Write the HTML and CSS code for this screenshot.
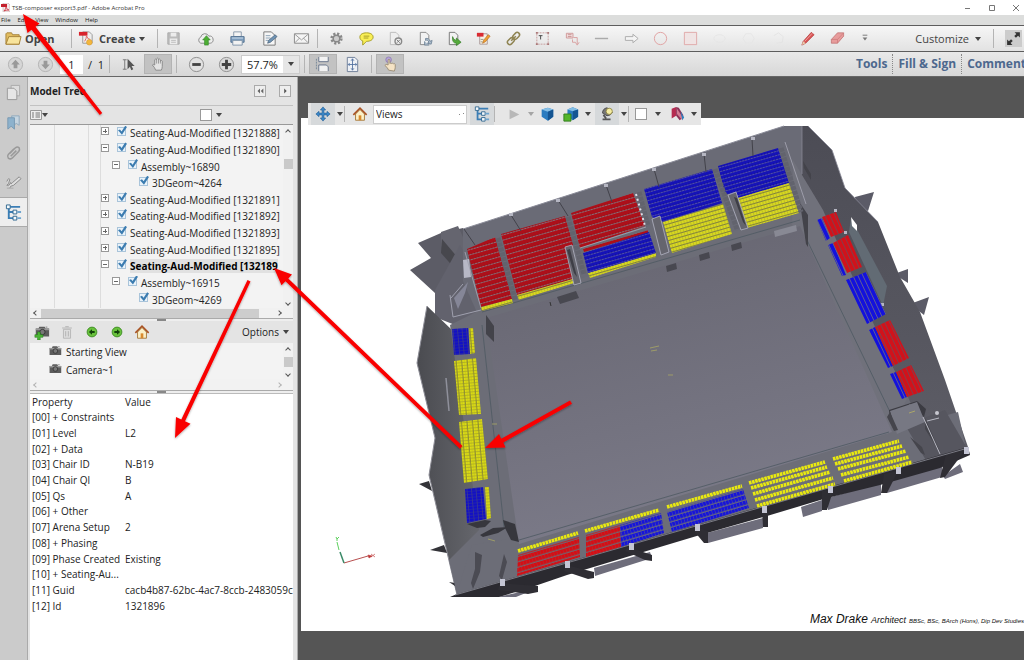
FILE: index.html
```html
<!DOCTYPE html>
<html lang="en">
<head>
<meta charset="utf-8">
<title>TSB-composer export3.pdf - Adobe Acrobat Pro</title>
<link rel="stylesheet" href="styles.css">
</head>
<body>
<div class="app">
  <header class="titlebar">
    <svg class="pdf-mark" viewBox="0 0 9 9"><path d="M2 0h5l2 2v7H2z" fill="#f4eaea" stroke="#b99" stroke-width=".5"/><path d="M0 1h6v3H0z" fill="#c4202c"/><path d="M3 8q2-2 2-4 1 3 3 3-3 0-5 1" fill="none" stroke="#c4202c" stroke-width=".7"/></svg>
    <h1 class="title">TSB-composer export3.pdf - Adobe Acrobat Pro</h1>
    <div class="win-controls">
      <button aria-label="Minimize"><svg viewBox="0 0 8 8"><path d="M1 4.5h5" stroke="#777"/></svg></button>
      <button aria-label="Maximize"><svg viewBox="0 0 8 8"><path d="M1.500 1.500h5v5h-5z" fill="none" stroke="#777"/></svg></button>
      <button aria-label="Close"><svg viewBox="0 0 8 8"><path d="M1 1l6 6M7 1L1 7" stroke="#777" fill="none"/></svg></button>
    </div>
  </header>
  <nav class="menubar">
    <button>File</button><button>Edit</button><button>View</button><button>Window</button><button>Help</button>
  </nav>

  <div class="toolbar main-tools">
    <button class="text-btn open">
      <svg class="ic18" viewBox="0 0 18 18"><path d="M1 15V4l1-1h5l1 2h7v10z" fill="#e2bd60" stroke="#a58238"/><path d="M1 15L4 7h13l-2 8z" fill="#f8e49c" stroke="#a58238"/></svg>
      Open</button>
    <span class="sep"></span>
    <button class="text-btn create">
      <svg class="ic18" viewBox="0 0 18 18"><path d="M5 2h7l3 3v9H5z" fill="#eee" stroke="#999"/><path d="M1 2h9v4H1z" fill="#d8232c"/><path d="M7 12q2-3 2-6 1 4 4 4" fill="none" stroke="#d66" /><circle cx="12" cy="13" r="3" fill="#f3b73d" stroke="#d2922a" stroke-width=".5"/></svg>
      Create <i class="caret"></i></button>
    <span class="sep"></span>
    <div class="icon-row file-group">
      <button aria-label="Save"><svg viewBox="0 0 18 18"><path d="M3 3h12v12H3z" fill="#bbb" stroke="#aaa"/><path d="M6 3h6v4H6zM5 9h8v6H5z" fill="#ececec"/><path d="M6.500 11h5M6.500 13h5" stroke="#bbb"/></svg></button>
      <button aria-label="Upload"><svg viewBox="0 0 18 18"><path d="M4 14a3.500 3.500 0 010-6.500 4.500 4.500 0 018.500-1A3.800 3.800 0 0114 14z" fill="#eee" stroke="#8a8a8a"/><path d="M10 6l4 4.500h-2V16H8v-5.500H6z" fill="#4dae34" stroke="#2d8321" stroke-width=".6"/></svg></button>
      <button aria-label="Print"><svg viewBox="0 0 18 18"><path d="M5 2h8v5H5z" fill="#f4f4f4" stroke="#8899aa"/><path d="M2 7h14v6H2z" fill="#7d9fc0" stroke="#52708f"/><path d="M4 11h10v5H4z" fill="#f2f2f2" stroke="#8095aa"/><path d="M3 8.500h12" stroke="#cfdeea"/></svg></button>
      <button aria-label="Edit"><svg viewBox="0 0 18 18"><path d="M3 2h8l4 4v10H3z" fill="#f6f6f6" stroke="#777"/><path d="M5 6h5M5 8.500h5M5 11h3" stroke="#8aa0b5"/><path d="M7 14l1-3 7-6 2 2-7 6z" fill="#6e93b4" stroke="#3f5870" stroke-width=".7"/></svg></button>
      <button aria-label="Mail"><svg viewBox="0 0 18 18"><path d="M1.500 4h15v10h-15z" fill="#f4f4f4" stroke="#888"/><path d="M2 4.500l7 6 7-6M2 13.500l5-5M16 13.500l-5-5" fill="none" stroke="#999"/></svg></button>
    </div>
    <span class="sep"></span>
    <div class="icon-row quick-group">
      <button aria-label="Settings"><svg viewBox="0 0 18 18"><circle cx="9" cy="9" r="5" fill="none" stroke="#888" stroke-width="3" stroke-dasharray="2.200 1.727"/><circle cx="9" cy="9" r="3.500" fill="#ccc" stroke="#888" stroke-width="1.600"/></svg></button>
      <button aria-label="Comment"><svg viewBox="0 0 18 18"><path d="M9 3c4 0 7 1.600 7 4.500S13 12 9 12l-4 4v-4.500C3 11 2 9.500 2 7.500 2 4.600 5 3 9 3z" fill="#f9ef55" stroke="#a49b27"/><path d="M6 6.500h6M6 8.500h5" stroke="#a49b27"/></svg></button>
      <button aria-label="Remove page"><svg viewBox="0 0 18 18"><path d="M3.500 2.500h6l3 3v10h-9z" fill="#eee" stroke="#bbb"/><circle cx="12" cy="12" r="3.500" fill="#eee" stroke="#888" stroke-width="1.500"/><path d="M10.500 10.500l3 3m0-3l-3 3" stroke="#777"/></svg></button>
      <button aria-label="Rotate page"><svg viewBox="0 0 18 18"><path d="M3.500 2.500h6l3 3v10h-9z" fill="#f2f2f2" stroke="#888"/><path d="M9 9a4 4 0 015 3l2-1-1 4-4-1 1.500-1a2.500 2.500 0 00-3.500-2zM8 12v4h5" fill="#aebccb" stroke="#657b91" stroke-width=".8"/></svg></button>
      <button aria-label="Extract page"><svg viewBox="0 0 18 18"><path d="M3.500 2.500h6l3 3v10h-9z" fill="#f2f2f2" stroke="#777"/><path d="M7 7q1 4 4 4V8.500l5 4.500-5 3.500V14q-5 0-4-7" fill="#56ab3c" stroke="#2f7721" stroke-width=".7"/></svg></button>
      <button aria-label="Edit PDF"><svg viewBox="0 0 18 18"><path d="M5 4h8v11H5z" fill="#f7f1e3" stroke="#a99"/><path d="M2 3h7v4H2z" fill="#d92b32"/><path d="M8 14l1-3 5-6 2 1.500-5 6z" fill="#f0a233" stroke="#b36b20" stroke-width=".7"/><path d="M6 10h3M6 12.500h2" stroke="#998"/></svg></button>
      <button aria-label="Link"><svg viewBox="0 0 18 18"><g transform="rotate(-45 9 9)" fill="none" stroke="#8f8452" stroke-width="1.600"><rect x="1" y="6.500" width="8" height="5" rx="2.500"/><rect x="9" y="6.500" width="8" height="5" rx="2.500"/><path d="M5.500 9h7"/></g></svg></button>
      <button aria-label="Text box"><svg viewBox="0 0 18 18"><path d="M3 3h12v12H3z" fill="none" stroke="#c79c9c" stroke-dasharray="2 1"/><path d="M2 2h2v2H2zM14 2h2v2h-2zM2 14h2v2H2zM14 14h2v2h-2z" fill="#a77"/><path d="M5 6h4M7 6v4" stroke="#444"/></svg></button>
      <button aria-label="Callout"><svg viewBox="0 0 18 18"><path d="M2.500 3.500h7v5h-7z" fill="#f4e4e4" stroke="#cf9898"/><path d="M4 5h4M4 7h4" stroke="#c68c8c"/><path d="M10 8h4v7m-2-2l2 3 2-3M9 10v3h3" fill="none" stroke="#d8a0a0"/></svg></button>
      <button aria-label="Line"><svg viewBox="0 0 18 18"><path d="M2 9h14" stroke="#aaa" stroke-width="1.500"/></svg></button>
      <button aria-label="Arrow"><svg viewBox="0 0 18 18"><path d="M2.500 7h8V4.500L16 9l-5.500 4.500V11h-8z" fill="#f4f4f4" stroke="#aaa"/></svg></button>
      <button aria-label="Oval"><svg viewBox="0 0 18 18"><circle cx="9" cy="9" r="6.500" fill="none" stroke="#e0a0a0"/></svg></button>
      <button aria-label="Rectangle"><svg viewBox="0 0 18 18"><path d="M2.500 2.500h13v13h-13z" fill="#f0e4e4" stroke="#e0a8a8"/></svg></button>
      <button aria-label="Cloud"><svg viewBox="0 0 18 18"><ellipse cx="9" cy="9" rx="6" ry="4" fill="none" stroke="#e5e5e5"/></svg></button>
      <button aria-label="Polygon"><svg viewBox="0 0 18 18"><path d="M6 4h6l3 5-3 5H6L3 9z" fill="none" stroke="#e5e5e5"/></svg></button>
      <button aria-label="Connected lines"><svg viewBox="0 0 18 18"><path d="M4 6l5-3 5 4-1 6-6 1" fill="none" stroke="#e3e3e3"/></svg></button>
      <button aria-label="Pencil"><svg viewBox="0 0 18 18"><path d="M3 16l1.500-4L13 2.500 16 5 7 14z" fill="#da5656" stroke="#a33" stroke-width=".7"/><path d="M3 16l1.500-4L7 14z" fill="#e8cfae"/><path d="M6 12l8-8.500" stroke="#f2a0a0"/></svg></button>
      <button aria-label="Eraser"><svg viewBox="0 0 18 18"><path d="M2.500 10L9 3h6.500v3.500L9 14H2.500z" fill="#e79c9c" stroke="#b66" stroke-width=".7"/><path d="M2.500 10H9v4M9 10l6.500-7" fill="none" stroke="#c77" stroke-width=".7"/></svg></button>
    </div>
    <button class="more" aria-label="More tools"><svg viewBox="0 0 18 18"><path d="M7 5.500h5" stroke="#777"/><path d="M7 8h5l-2.500 3z" fill="#777"/></svg></button>
    <button class="customize">Customize <i class="caret"></i></button>
    <span class="sep"></span>
    <button class="fullscreen" aria-label="Read mode"><svg viewBox="0 0 16 16"><path d="M9 2h5v5l-1.700-1.700-2 2-1.600-1.600 2-2zM7 14H2V9l1.700 1.700 2-2 1.600 1.600-2 2z" fill="#333"/></svg></button>
  </div>

  <div class="toolbar page-tools">
    <button class="round" aria-label="Previous page"><svg viewBox="0 0 18 18"><circle cx="9" cy="9" r="7.500" fill="#d6d6d6" stroke="#b3b3b3"/><path d="M9 4l4.500 5H11v4H7V9H4.500z" fill="#999"/></svg></button>
    <button class="round" aria-label="Next page"><svg viewBox="0 0 18 18"><circle cx="9" cy="9" r="7.500" fill="#d6d6d6" stroke="#b3b3b3"/><path d="M9 14l4.500-5H11V5H7v4H4.500z" fill="#999"/></svg></button>
    <input class="page-no" type="text" value="1" aria-label="Page number">
    <span class="page-total">/ &nbsp;1</span>
    <span class="sep"></span>
    <button class="tool select" aria-label="Select"><svg viewBox="0 0 18 18"><path d="M3 4h4M5 4v10M3 14h4" stroke="#777" fill="none"/><path d="M8 3v11l2.500-2.500L12 15l2-1-1.700-3.300H15.500z" fill="#555"/></svg></button>
    <button class="tool pressed" aria-label="Hand"><svg viewBox="0 0 18 18"><path d="M6 15q-1-3-3.500-5.500Q3 8 5 9.500V4q1-1.500 2 0V3q1-1.500 2 0v1q1-1.500 2 0v1.500q1.500-1.500 2 0V11q0 2-1 4z" fill="#e3e3e3" stroke="#888"/><path d="M7 4v4M9 4v4M11 5v3" stroke="#888" stroke-width=".8"/></svg></button>
    <span class="sep"></span>
    <button class="round" aria-label="Zoom out"><svg viewBox="0 0 18 18"><circle cx="9" cy="9" r="7.500" fill="#e2e2e2" stroke="#8c8c8c"/><path d="M4.500 7.500h9v3h-9z" fill="#444"/></svg></button>
    <button class="round" aria-label="Zoom in"><svg viewBox="0 0 18 18"><circle cx="9" cy="9" r="7.500" fill="#dcdcdc" stroke="#8c8c8c"/><path d="M4 7.500h3.500V4h3v3.500H14v3h-3.500V14h-3v-3.500H4z" fill="#444"/></svg></button>
    <div class="zoom-box"><input type="text" value="57.7%" aria-label="Zoom level"><button aria-label="Zoom levels"><i class="caret"></i></button></div>
    <span class="sep"></span>
    <button class="tool pressed" aria-label="Scrolling pages"><svg viewBox="0 0 18 18"><path d="M4 1v5h10V1M4 16V9.500h8l2 2V16" fill="#f2f2f2" stroke="#66748a"/><path d="M1.500 3v12" stroke="#789" stroke-dasharray="2 1"/></svg></button>
    <button class="tool fit" aria-label="Fit page"><svg viewBox="0 0 18 18"><path d="M3.500 1.500h8l3 3v12h-11z" fill="#eef1f6" stroke="#6e7e98"/><path d="M9 3v12M4.500 9h9M7.500 5L9 3l1.500 2M7.500 13L9 15l1.500-2M6 7.500L4.500 9 6 10.500M12 7.500L13.500 9 12 10.500" fill="none" stroke="#4f6f9e" stroke-width=".9"/></svg></button>
    <span class="sep"></span>
    <button class="tool pressed" aria-label="Interact"><svg viewBox="0 0 18 18"><circle cx="7" cy="4" r="3" fill="#b5a4d6" stroke="#8570b0" stroke-width=".7"/><path d="M7 15q-1-3-4-5 1-2 3.500-.5V4q1-1.200 1.800 0v4q1-1 2 0 1-.8 2 .3 1-.6 1.700.6V12q0 1.500-1 4z" fill="#f5e3c5" stroke="#8e8068" stroke-width=".8"/></svg></button>
    <div class="pane-links"><a href="#tools">Tools</a><a href="#sign">Fill &amp; Sign</a><a href="#comment">Comment</a></div>
  </div>

  <main class="workspace">
    <nav class="rail">
      <button aria-label="Page thumbnails"><svg viewBox="0 0 18 18"><path d="M6.500 1.500h9v11h-9z" fill="#ddd" stroke="#aaa"/><path d="M2.500 4.500h7l3 3v9h-10z" fill="#e6e6e6" stroke="#999"/></svg></button>
      <button aria-label="Bookmarks"><svg viewBox="0 0 18 18"><path d="M7 2h8v10l-3-2-3 2z" fill="#c6d5e0" stroke="#8ea9bd"/><path d="M3 4h7v12l-3.500-3L3 16z" fill="#8db2cd" stroke="#7799b3"/></svg></button>
      <button aria-label="Attachments"><svg viewBox="0 0 18 18"><path d="M5 10l6-6q2-1.500 4 0 1 2-.5 4l-7 7q-2 1.500-4 0-1.500-2 0-4l6-6M6 13l6-6" fill="none" stroke="#999" stroke-width="1.600"/></svg></button>
      <button aria-label="Signatures"><svg viewBox="0 0 18 18"><path d="M2 8q2-5 3-2-1 5-3 6 3 1 4-3 0 3 2 0l7-6 2 2-8 7-3 1-1 2" fill="#ddd" stroke="#888"/><path d="M2 15h7" stroke="#aaa"/></svg></button>
      <button class="current" aria-label="Model tree"><svg viewBox="0 0 18 18"><use href="#tree-glyph"/></svg></button>
    </nav>

    <aside class="panel">
      <div class="panel-head">
        <h2>Model Tree</h2>
        <button aria-label="Collapse"><svg viewBox="0 0 12 12"><path d="M6 3v6L3 6zM10 3v6L7 6z" fill="#666"/></svg></button>
        <button aria-label="Panel menu"><svg viewBox="0 0 12 12"><path d="M5 3v6l3-3z" fill="#555"/></svg></button>
      </div>
      <div class="panel-tools">
        <button class="opt" aria-label="Display options"><svg viewBox="0 0 12 10"><path d="M.5.500h11v9H.5z" fill="#eee" stroke="#999"/><path d="M2 3h2M2 5h2M2 7h2M5.500 3h4.500M5.500 5h4.500M5.500 7h4.500" stroke="#777"/></svg><i class="caret"></i></button>
        <button class="swatch-btn" aria-label="Background"><span class="swatch"></span><i class="caret"></i></button>
      </div>
      <div class="tree-box">
        <div class="tree-main">
          <ul class="tree">
            <li class="l1"><button class="tg plus" aria-label="Expand"></button><label><input type="checkbox" checked>Seating-Aud-Modified [1321888]</label></li>
            <li class="l1"><button class="tg" aria-label="Collapse"></button><label><input type="checkbox" checked>Seating-Aud-Modified [1321890]</label></li>
            <li class="l2"><button class="tg" aria-label="Collapse"></button><label><input type="checkbox" checked>Assembly~16890</label></li>
            <li class="l3"><label><input type="checkbox" checked>3DGeom~4264</label></li>
            <li class="l1"><button class="tg plus" aria-label="Expand"></button><label><input type="checkbox" checked>Seating-Aud-Modified [1321891]</label></li>
            <li class="l1"><button class="tg plus" aria-label="Expand"></button><label><input type="checkbox" checked>Seating-Aud-Modified [1321892]</label></li>
            <li class="l1"><button class="tg plus" aria-label="Expand"></button><label><input type="checkbox" checked>Seating-Aud-Modified [1321893]</label></li>
            <li class="l1"><button class="tg plus" aria-label="Expand"></button><label><input type="checkbox" checked>Seating-Aud-Modified [1321895]</label></li>
            <li class="l1 selected"><button class="tg" aria-label="Collapse"></button><label><input type="checkbox" checked><span>Seating-Aud-Modified [132189</span></label></li>
            <li class="l2"><button class="tg" aria-label="Collapse"></button><label><input type="checkbox" checked>Assembly~16915</label></li>
            <li class="l3"><label><input type="checkbox" checked>3DGeom~4269</label></li>
          </ul>
          <div class="vscroll"><i class="chev up"></i><span class="thumb low"></span><i class="chev down"></i></div>
        </div>
        <div class="hscroll"><i class="chev left"></i><span class="thumb"></span><i class="chev right"></i></div>
      </div>
      <div class="splitter"></div>
      <div class="view-tools">
        <button aria-label="Add view"><svg viewBox="0 0 18 18"><use href="#camera"/><path d="M1 12h3V9h3v3h3v3H7v3H4v-3H1z" fill="#4cb535" stroke="#23791a" stroke-width=".6"/></svg></button>
        <button aria-label="Delete view"><svg viewBox="0 0 18 18"><path d="M5 6h8v10H5z" fill="#ddd" stroke="#b5b5b5"/><path d="M3.500 4.500h11M7 3h4M7.500 8v6M10.500 8v6" stroke="#b0b0b0"/></svg></button>
        <button aria-label="Previous view"><svg viewBox="0 0 18 18"><circle cx="9" cy="9" r="5.500" fill="#68c13c" stroke="#3c8a22"/><path d="M5.500 9L9 5.800V8h3v2H9v2.200z" fill="#12420a"/></svg></button>
        <button aria-label="Next view"><svg viewBox="0 0 18 18"><circle cx="9" cy="9" r="5.500" fill="#68c13c" stroke="#3c8a22"/><path d="M12.500 9L9 5.800V8H6v2h3v2.200z" fill="#12420a"/></svg></button>
        <button aria-label="Default view"><svg viewBox="0 0 18 18"><use href="#home"/></svg></button>
        <button class="options">Options <i class="caret"></i></button>
      </div>
      <div class="views-box">
        <div class="views-main">
          <ul class="views">
            <li><svg viewBox="0 0 18 18"><use href="#camera"/></svg>Starting View</li>
            <li><svg viewBox="0 0 18 18"><use href="#camera"/></svg>Camera~1</li>
          </ul>
          <div class="vscroll"><i class="chev up"></i><span class="thumb"></span><i class="chev down"></i></div>
        </div>
        <div class="hscroll off"><i class="chev left"></i><i class="chev right"></i></div>
      </div>
      <div class="splitter"></div>
      <div class="props-box">
        <table class="props">
          <thead><tr><th scope="col">Property</th><th scope="col">Value</th></tr></thead>
          <tbody>
            <tr><td>[00] + Constraints</td><td></td></tr>
            <tr><td>[01] Level</td><td>L2</td></tr>
            <tr><td>[02] + Data</td><td></td></tr>
            <tr><td>[03] Chair ID</td><td>N-B19</td></tr>
            <tr><td>[04] Chair Ql</td><td>B</td></tr>
            <tr><td>[05] Qs</td><td>A</td></tr>
            <tr><td>[06] + Other</td><td></td></tr>
            <tr><td>[07] Arena Setup</td><td>2</td></tr>
            <tr><td>[08] + Phasing</td><td></td></tr>
            <tr><td>[09] Phase Created</td><td>Existing</td></tr>
            <tr><td>[10] + Seating-Au...</td><td></td></tr>
            <tr><td>[11] Guid</td><td>cacb4b87-62bc-4ac7-8ccb-2483059c</td></tr>
            <tr><td>[12] Id</td><td>1321896</td></tr>
          </tbody>
        </table>
      </div>
    </aside>

    <section class="viewer">
      <div class="sheet">
        <svg class="model" viewBox="301 118 723 487" role="img" aria-label="Arena seating model">
          <defs>
            <linearGradient id="floor" x1="0" y1="0" x2=".3" y2="1"><stop offset="0" stop-color="#65646f"/><stop offset="1" stop-color="#7b7a88"/></linearGradient>
            <linearGradient id="wallL" x1="0" y1="0" x2="1" y2="0"><stop offset="0" stop-color="#4a4b50"/><stop offset="1" stop-color="#66676d"/></linearGradient>
            <linearGradient id="wallR" x1="0" y1="0" x2="0" y2="1"><stop offset="0" stop-color="#4c4c55"/><stop offset="1" stop-color="#5d5d66"/></linearGradient>
            <pattern id="tr" width="3" height="5" patternUnits="userSpaceOnUse" patternTransform="rotate(-16)"><path d="M0 0h3v5H0z" fill="#ad0f19"/><path d="M0 4.500h3" stroke="#8d6b75"/><path d="M2.700 3v2" stroke="#6d1018" stroke-width=".5"/></pattern>
            <pattern id="tb" width="3" height="4" patternUnits="userSpaceOnUse" patternTransform="rotate(-16)"><path d="M0 0h3v4H0z" fill="#1512b8"/><path d="M0 3.600h3" stroke="#6664a4" stroke-width=".8"/><path d="M2.700 2v2" stroke="#0c0a6c" stroke-width=".5"/></pattern>
            <pattern id="ty" width="3" height="4" patternUnits="userSpaceOnUse" patternTransform="rotate(-16)"><path d="M0 0h3v4H0z" fill="#d8d820"/><path d="M0 3.500h3" stroke="#7f7f42"/><path d="M2.700 0v4" stroke="#9a9a26" stroke-width=".5"/></pattern>
            <pattern id="ly" width="5.500" height="3" patternUnits="userSpaceOnUse" patternTransform="rotate(-5)"><path d="M0 0h6v3H0z" fill="#8e8e32"/><path d="M0 0h4.300v2.500H0z" fill="#dddd12"/><path d="M2 0v3" stroke="#b0b020" stroke-width=".5"/></pattern>
            <pattern id="lb" width="4.500" height="3" patternUnits="userSpaceOnUse" patternTransform="rotate(-5)"><path d="M0 0h5v3H0z" fill="#3c3b8c"/><path d="M0 0h3.800v2.600H0z" fill="#1210c4"/></pattern>
            <pattern id="rr" width="4.500" height="3" patternUnits="userSpaceOnUse" patternTransform="rotate(-25)"><path d="M0 0h5v3H0z" fill="#7a444e"/><path d="M0 0h3.700v3H0z" fill="#d1121b"/></pattern>
            <pattern id="rb" width="4.500" height="3" patternUnits="userSpaceOnUse" patternTransform="rotate(-25)"><path d="M0 0h5v3H0z" fill="#66668c"/><path d="M0 0h3.700v3H0z" fill="#1411dc"/></pattern>
            <pattern id="fr" width="3.200" height="5.200" patternUnits="userSpaceOnUse" patternTransform="rotate(-16.500)"><path d="M0 0h4v6H0z" fill="#77606a"/><path d="M0 0h3v4H0z" fill="#d50e14"/></pattern>
            <pattern id="fb" width="3.200" height="5.200" patternUnits="userSpaceOnUse" patternTransform="rotate(-16.500)"><path d="M0 0h4v6H0z" fill="#676781"/><path d="M0 0h2.800v4H0z" fill="#1614da"/></pattern>
          </defs>
          <!-- outer fins and walls -->
          <path d="M418 243l23-10 22-5 20 40-40 50-8-25-25-23 21-12z" fill="#5c5c66"/>
          <path d="M441 232l17-6 20 45-13 7-24-32z" fill="#65656f"/>
          <path d="M442 239l22 26v14l-23-26z" fill="#47474d"/>
          <path d="M435 290l25-45 30 60-10 30-45-18z" fill="#62626d"/>
          <path d="M427 306l25 24 28 202-5 63h-18L429 475l6-37-18-75z" fill="url(#wallL)"/>
          <path d="M427 306l-10 57 18 75-6 37 28 120" fill="none" stroke="#8c8c95"/>
          <path d="M419 484l10-3 3 10zM430 550l14-5 3 8zM449 582l6 1v3z" fill="#333338"/>
          <path d="M463 229L784 126h24l30 80-45 40-310 80-20-45z" fill="#6a6b76"/>
          <path d="M463 229L784 126" stroke="#8b8c99" fill="none"/>
          <path d="M855 197l19-5-6 19-12-4zM894 274l14-5v14zM910 304l19-7-5 18z" fill="#5b5b67"/>
          <path d="M802 126h6l24 24 13 38 33 34 22 55 20 35 25 68 23 67-40 8-100-190-26-80z" fill="url(#wallR)"/>
          <path d="M851 218l36 68-4 20-34-74z" fill="#626b74"/>
          <path d="M851 217l6 8v6l-5-5z" fill="#fff"/>
          <path d="M802 126v48M808 126l24 24 13 38 33 34" fill="none" stroke="#888895" stroke-width=".8"/>
          <!-- concourses and arena floor -->
          <path d="M450 325l32-16 318-98 16 6 92 180 20 45 37 12-508 141-8-35 30-30z" fill="#6c6d77"/>
          <path d="M472 545l46-8 440-125 8 36-509 147 6-22z" fill="#6c6d77"/>
          <path d="M905 425l40-15 22 38-40 14z" fill="#56565f"/>
          <path d="M793 160l30 50 84 189-20 36-95-195z" fill="#70717b"/>
          <path d="M486 318L800 226l92 206-373 112z" fill="url(#floor)"/>
          <path d="M482 312L800 220M519 540l370-108M482 325l22 202M806 238l86 178" fill="none" stroke="#4e5962" stroke-width=".8"/>
          <path d="M557 297l19-6 3 7-19 6zM666 266l10-3 1 6-10 3zM699 255l10-3 1 6-10 3zM731 245l10-3 1 6-10 3z" fill="#484850"/>
          <path d="M774 231l22-6 1 6-22 6z" fill="#888994"/>
          <path d="M486 315l8 11v16l-8-8zM800 203l8 12v32l-2-3zM803 161l8 13v6l-7-12z" fill="#43434a"/>
          <path d="M550 302l1 4" stroke="#333"/>
          <path d="M463 260l6-1 2 18-7 1z" fill="#b7b8c6"/>
          <path d="M450 295l3 22 28-7M451 298l12-14" fill="none" stroke="#9fa0ae"/>
          <path d="M454 298l14-16-3 11-7 16z" fill="#858697"/>
          <path d="M446 378l3 33" stroke="#8f909b" stroke-width="1.500"/>
          <!-- upper stand -->
          <path d="M467 249l28-12 17 62-31 8z" fill="url(#tr)"/>
          <path d="M501 234l64-18 8 28v35l-56 16z" fill="url(#tr)"/>
          <path d="M571 213l62-20 12 33-65 22zM583 249l65-19v3l-64 19z" fill="url(#tr)"/>
          <path d="M481 307l31-8 1 4-31 8zM517 295l56-16 1 4-55 17zM588 273l68-20v4l-66 21z" fill="url(#ty)"/>
          <path d="M583 253l66-21 7 21-68 20z" fill="url(#tb)"/>
          <path d="M644 189l68-20 10 34-59 19-11-5zM718 166l60-18 11 35-51 15-13-5z" fill="url(#tb)"/>
          <path d="M663 222l60-18 9 30-60 19zM738 198l51-15 10 30-52 15z" fill="url(#ty)"/>
          <g fill="none" stroke="#62636d" stroke-width="5" stroke-dasharray="4 1"><path d="M498 238l17 62M568 217l16 57M639 192l9 34M715 169l22 60M781 148l20 64"/></g>
          <g fill="#65656e" stroke="#b3b4c3" stroke-width=".8"><path d="M565 247l7-2 9 38-7 2zM652 219l8-3 9 36-8 3zM728 195l8-3 12 36-7 2z"/></g>
          <g fill="#3e3e46"><path d="M567 250l3-1 7 28-3-4zM734 197l3 1 9 28-3-4z"/></g>
          <path d="M580 248l66-21M465 252l16 56M785 142l21 62" fill="none" stroke="#a1a2af" stroke-width=".9"/>
          <g stroke="#42424a" fill="none"><path d="M464 229l11 16M511 215l10 16M558 200l10 16M606 185l6 17M654 169l5 18M704 154l2 18M752 139l1 17"/></g>
          <g fill="#b5b6c2"><path d="M509 213h4v3h-4zM556 199h4v3h-4zM604 184h4v3h-4zM652 168h4v3h-4zM702 153h4v3h-4zM751 137h4v3h-4zM834 209h3v3h-3zM844 231h3v3h-3zM881 303h3v3h-3z"/></g>
          <path d="M636 194l9 32" stroke="#dedee8" stroke-width="2" stroke-dasharray="2 3"/>
          <!-- right stand -->
          <path d="M817 220l5-2 8 20-4 3zM828 245l5-2 13 32-4 1zM846 280l20-8 20 42-19 10zM869 330l6-3 18 39-5 2zM890 374l6-2 11 25-5 2z" fill="url(#rb)"/>
          <path d="M822 217l14-5 8 20-13 5zM833 243l15-8 14 32-15 6zM875 327l15-7 19 38-16 8zM896 372l15-7 13 26-17 6z" fill="url(#rr)"/>
          <!-- left stand -->
          <path d="M452 329l16-1 2 26-16 1zM465 489l18-2 3 32-19 4z" fill="url(#lb)"/>
          <path d="M469 328h4l2 25-5 1zM454 361l22-3 5 56-22 1zM459 422l23-3 6 60-24 4zM485 487h4l2 31-4 1z" fill="url(#ly)"/>
          <path d="M467 524l18-4 6 1-6 6-8 1zM480 535l13-7 15-1-10 6-15 4zM503 520l12 4 4 18-8-2-6-12z" fill="#37373d"/>
          <path d="M475 552l7 3-2 17-7 17-2-6 4-14zM504 554l3 8-5 18-3-4z" fill="#4b4b53"/>
          <path d="M889 410l28-9 9 8-2 8-14-13-20 14z" fill="#3b3b42"/>
          <path d="M890 411l27-9 8 20-28 12z" fill="#777883"/>
          <path d="M890 412l8 18-4 1-7-14zM910 437l12 10 3 8-4-2zM925 418l16 36-16-25z" fill="#45454c"/>
          <path d="M923 417l17 37M927 421l12-3" stroke="#b9bac4" fill="none"/><circle cx="937" cy="413" r="2" fill="#c8c8d0"/>
          <!-- front wall: outer panels, wall band, buttresses -->
          <path d="M498 597l40-9-22 9zM594 568l56-16 2 6-57 18zM707 533l56-15v10l-55 15zM801 507l21-7v11l-19 6zM827 498l54-15v12l-53 15zM888 482l54-16v11l-55 16zM943 476l17-12 3 8-18 7z" fill="#6e6d7b"/>
          <path d="M450 597l7-3 511-147 2 8-30 13-60 17-53 13-60 18-67 19-60 18-73 22-38 13-30 9z" fill="#2b2a30"/>
          <path d="M500 583l38 3v6l-10 2-30-4zM566 565l28 7v6l-6 1-24-8zM628 547l24 8v6l-7-1-20-9zM695 527l13 4v12h-4l-10-12zM762 508l6 4v15h-5zM822 490l11 1-6 19h-5zM884 474l14-3-11 22h-6zM966 449l-21 28-5 1 6-24z" fill="#2f2e34"/>
          <path d="M455 595l513-147" stroke="#8f909a" stroke-width=".8"/>
          <!-- front stand -->
          <path d="M518 555l61-18 1 20-63 19zM586 535l34-10 1 22-35 10z" fill="url(#fr)"/>
          <path d="M620 525l41-12 3 20-43 14zM667 512l76-23 6 19-77 24z" fill="url(#fb)"/>
          <g fill="none" stroke="#e9e910" stroke-width="3.600" stroke-dasharray="2.600 .6"><path d="M518 551l60-18M585 531l74-21M667 507l75-21M749 483l76-21M751 488l76-21M753 494l77-22M755 500l78-22M757 506l78-22M833 459l66-18M835 464l67-18M838 469l68-18M841 475l68-18M844 481l68-19"/></g>
          <g fill="#c4c5d4"><path d="M500 579h5v7h-5zM565 561h5v7h-5zM629 543h5v7h-5zM695 524h5v7h-5zM762 506h5v7h-5zM828 486h5v7h-5zM896 467h5v7h-5zM964 447h5v7h-5z"/></g>
          <path d="M650 348l9-2m-8 5l6-1M668 375h5M492 424h5M488 539l7 2M780 403" stroke="#a3a067" fill="none" stroke-width=".9"/><path d="M909 413l6-2" stroke="#aaa668"/>
          <!-- axes -->
          <path d="M344 563l24-7" stroke="#b85050" fill="none"/><path d="M368 555l4 1-3 2zM371 554l4 3m0-3l-4 3" fill="#b33" stroke="#b33" stroke-width=".6"/>
          <path d="M344 563l-4-11" stroke="#3a8a68" fill="none" stroke-width="1.500"/><path d="M339 550l-2-8m-1-5l1 2 2-2m-2 2v2" stroke="#5dd05d" fill="none"/>
        </svg>
        <p class="credit"><span class="name">Max Drake</span> <span class="role">Architect</span> <span class="quals">BBSc, BSc, BArch (Hons), Dip Dev Studies</span></p>
      </div>

      <div class="model-tools">
        <button class="on" aria-label="Rotate"><svg viewBox="0 0 18 18"><path d="M9 1l3 3.500h-2V8h3.500V6L17 9l-3.500 3v-2H10v3.500h2L9 17l-3-3.500h2V10H4.500v2L1 9l3.500-3v2H8V4.500H6z" fill="#3d89c9" stroke="#255f96" stroke-width=".7"/></svg></button>
        <button class="drop" aria-label="Navigation tools"><i class="caret"></i></button>
        <span class="sep first"></span>
        <button class="home" aria-label="Home view"><svg viewBox="0 0 18 18"><use href="#home"/></svg></button>
        <select aria-label="Views"><option>Views</option></select>
        <button class="on" aria-label="Toggle model tree"><svg viewBox="0 0 18 18"><use href="#tree-glyph"/></svg></button>
        <span class="sep"></span>
        <button class="play" aria-label="Play"><svg viewBox="0 0 18 18"><path d="M4 4l11 5.500L4 15z" fill="#b8b8b8"/></svg></button>
        <button class="drop faded" aria-label="Animation options"><i class="caret"></i></button>
        <button aria-label="Projection"><svg viewBox="0 0 18 18"><path d="M3 4l7-2 6 2v8l-6 4.500L3 12z" fill="#2b7cc0"/><path d="M3 4l7-2 6 2-6 2.500z" fill="#86bfe6"/><path d="M10 6.500L16 4v8l-6 4.500z" fill="#155592"/></svg></button>
        <button aria-label="Render mode"><svg viewBox="0 0 18 18"><path d="M5 4l6-2.500L17 4v8l-6 4-6-4z" fill="#2b7cc0"/><path d="M5 4l6-2.500L17 4l-6 2z" fill="#82bde4"/><path d="M11 6l6-2v8l-6 4z" fill="#155592"/><path d="M1 9h8v8H1z" fill="#54b52b" stroke="#2f7b1b"/></svg></button>
        <button class="drop" aria-label="Render modes"><i class="caret"></i></button>
        <button class="on" aria-label="Lighting"><svg viewBox="0 0 18 18"><path d="M4 8q0-5 5-6l6 5q-2 4-6 4z" fill="#777" stroke="#444"/><circle cx="11.500" cy="6" r="3.500" fill="#f5eda2" stroke="#8e8543"/><path d="M5 10l3 4M4 15h9" stroke="#555" stroke-width="2"/></svg></button>
        <button class="drop" aria-label="Lighting options"><i class="caret"></i></button>
        <span class="sep"></span>
        <button class="swatch-btn" aria-label="Background color"><span class="swatch"></span></button>
        <button class="drop" aria-label="Background colors"><i class="caret"></i></button>
        <button class="section" aria-label="Cross section"><svg viewBox="0 0 18 18"><path d="M3 3l5-2v10l-5 3z" fill="#b42b50"/><path d="M8 1l3 1 5 8v3l-4 3-4-5z" fill="#8c3157"/><path d="M9 3l6 9v4l-6-7z" fill="#d47b93"/><path d="M13 6l4 7-2 3z" fill="#2c80be"/></svg></button>
        <button class="drop" aria-label="Section options"><i class="caret"></i></button>
      </div>
    </section>
  </main>

  <svg class="arrows" viewBox="0 0 1024 660" preserveAspectRatio="xMinYMin meet" aria-hidden="true">
    <defs><filter id="shade" x="-10%" y="-10%" width="120%" height="120%"><feDropShadow dx="0" dy="1" stdDeviation="1" flood-opacity=".35"/></filter></defs>
    <g filter="url(#shade)" fill="#f90000" stroke="none">
      <path d="M23 14l16.500 9.500-4 3.200L102.200 113l-2.400 2L31.500 29.800l-4 3.200z"/>
      <path d="M274 268l18 6.500-3.700 4L462.500 446l-2.600 2.800L285.500 281.200l-4 4z"/>
      <path d="M175 438l1-21 5.300 2.500L247.500 280l3 1.500-65.500 139.800 5.500 2.500z"/>
      <path d="M485 448l14-14 2.200 4.800L570 400.500l2 3.300-68.700 38.600 2.200 5z"/>
    </g>
  </svg>

  <svg class="glyphs" aria-hidden="true"><defs>
    <symbol id="tree-glyph" viewBox="0 0 18 18"><path d="M4 3h12M4 3v12h6M4 8.500h6" fill="none" stroke="#3b7eb5" stroke-width="2"/><path d="M1.500 1h4v4h-4zM8.500 6.500h4v4h-4zM8.500 13h4v4h-4z" fill="#f3f8fc" stroke="#2f678f"/><path d="M13 8.500h4M13 15h4" stroke="#6fa5cf" stroke-width="2"/></symbol>
    <symbol id="camera" viewBox="0 0 18 18"><path d="M2 5h3l1-2h6l1 2h4v9H2z" fill="#5c5c5c"/><path d="M2 5h15v2H2z" fill="#999"/><circle cx="9.500" cy="9" r="3" fill="#777" stroke="#333"/><path d="M13 3.500h2" stroke="#777"/></symbol>
    <symbol id="home" viewBox="0 0 18 18"><path d="M4 9v7h10V9L9 4z" fill="#fbf0c8" stroke="#a37331"/><path d="M1.500 10L9 2.500l7.500 7.500" fill="none" stroke="#a85222" stroke-width="1.800"/><path d="M7.500 10.500h3V16h-3z" fill="#d98a2d"/></symbol>
  </defs></svg>
</div>
</body>
</html>
```
FILE: styles.css
```css
* { box-sizing: border-box; }
body { margin: 0; font-family: "Open Sans", "Noto Sans", sans-serif; font-size: 10px; color: #222; }
button, input, select { font: inherit; color: inherit; margin: 0; padding: 0; border: 0; background: none; border-radius: 0; }
button { display: flex; align-items: center; justify-content: center; flex: none; }
svg { display: block; flex: none; }
ul { list-style: none; margin: 0; padding: 0; }
h1, h2, p { margin: 0; }

.app { position: relative; display: flex; flex-direction: column; height: 100vh; overflow: hidden; background: #555; }
.caret { flex: none; border: 3px solid transparent; border-top: 4px solid #444; border-bottom: 0; }
.sep { flex: none; width: 1px; align-self: stretch; margin: 3px 0; background: #b4b4b4; }
.glyphs { position: absolute; width: 0; height: 0; }
.arrows { position: absolute; inset: 0; width: 100%; height: 100%; pointer-events: none; }

/* window chrome */
.titlebar { flex: none; display: flex; align-items: center; height: 15px; padding: 0 4px 0 1px; gap: 2px; background: #fff; }
.pdf-mark { width: 9px; height: 9px; }
.title { font-size: 6px; font-weight: 400; flex: 1; color: #333; }
.win-controls { display: flex; gap: 16px; }
.win-controls svg { width: 8px; height: 8px; }
.menubar { flex: none; display: flex; align-items: center; gap: 7px; height: 10px; padding-left: 1px; background: #dcdddc; font-size: 6px; }

.toolbar { flex: none; display: flex; align-items: center; border-top: 1px solid #5d5d5d; overflow: hidden; }
.main-tools { height: 26px; background: linear-gradient(#f6f6f6, #e2e2e2); font-size: 11px; }
.main-tools svg { width: 17px; height: 17px; }
.text-btn { font-weight: 700; color: #444; gap: 3px; justify-content: flex-start; }
.open { width: 71px; padding-left: 5px; }
.create { width: 85px; padding-left: 6px; gap: 4px; }
.icon-row { display: grid; grid-auto-flow: column; grid-auto-columns: 1fr; flex: none; }
.file-group { width: 159px; }
.quick-group { width: 530px; margin-left: 4px; }
.more { width: 24px; }
.customize { margin-left: auto; margin-right: 12px; gap: 6px; color: #444; }
.fullscreen { width: 17px; height: 17px; margin: 0 2px 0 11px; background: #ccc; }

.page-tools { height: 25px; background: linear-gradient(#e9e9e9, #d7d7d7); font-size: 11px; }
.page-tools svg { width: 17px; height: 17px; }
.round { width: 30px; }
.page-no { width: 23px; height: 19px; background: #fff; text-align: center; }
.page-total { width: 26px; text-align: center; }
.tool { width: 28px; height: 20px; }
.select { margin: 0 2px 0 4px; }
.pressed { background: #c2c2c2; border: 1px solid #b3b3b3; margin-right: 4px; }
.sep + .round, .sep + .pressed { margin-left: 4px; }
.zoom-box { display: flex; width: 59px; height: 19px; margin: 0 4px 0 0; background: #fff; border: 1px solid #ccc; }
.zoom-box input { width: 41px; text-align: center; }
.zoom-box button { flex: 1; background: #e6e6e6; }
.fit { width: 22px; margin-right: 8px; }
.pane-links { display: flex; flex: none; margin-left: auto; margin-right: -7px; font-size: 12px; font-weight: 700; line-height: 20px; }
.pane-links a { color: #4d688e; text-decoration: none; padding: 0 5px; border-left: 1px dotted #888; }
.pane-links a:first-child { border: 0; }

/* workspace */
.workspace { flex: 1; min-height: 0; display: flex; border-top: 1px solid #666; }
.rail { flex: none; width: 27px; background: #cbcbcb; }
.rail button { width: 100%; height: 30px; }
.rail svg { width: 17px; height: 17px; }
.rail .current { background: #eee; border: 1px solid #aaa; border-width: 1px 0; }
.panel { flex: none; width: 271px; display: flex; flex-direction: column; padding: 0 4px 0 2px; background: #e4e4e4; border: 1px solid #aaa; border-width: 0 1px; }
.panel-head { flex: none; display: flex; align-items: center; height: 29px; gap: 13px; padding-right: 2px; border-bottom: 1px solid #c2c2c2; }
.panel-head h2 { flex: 1; font-size: 10px; }
.panel-head button { width: 12px; height: 12px; border: 1px solid #aaa; background: #eee; }
.panel-head svg { width: 10px; height: 10px; }
.panel-tools { flex: none; display: flex; align-items: center; height: 18px; }
.panel-tools .swatch-btn { margin-left: 152px; gap: 4px; }
.opt svg { width: 12px; height: 10px; }
.swatch { width: 12px; height: 12px; background: #fff; border: 1px solid #999; }

.tree-box, .views-box { flex: none; background: #f3f3f3; border-top: 1px solid #999; }
.tree-main, .views-main { display: flex; }
.tree { flex: 1; min-width: 0; height: 183px; display: grid; grid-auto-rows: 1fr; overflow: hidden;
  background: linear-gradient(#ddd, #ddd) 24px 0 / 1px 100% no-repeat, linear-gradient(#ddd, #ddd) 58px 0 / 1px 100% no-repeat, linear-gradient(#ddd, #ddd) 70px 0 / 1px 100% no-repeat; }
.tree li { display: flex; align-items: center; gap: 8px; padding-left: 71px; white-space: nowrap; }
.tree .l2 { padding-left: 82px; }
.tree .l3 { padding-left: 109px; }
.tree label { display: flex; align-items: center; gap: 4px; height: 100%; }
.tree .selected span { font-weight: 700; background: #e1e1e1; color: #000; }
.tg { width: 8px; height: 8px; margin-bottom: 4px; border: 1px solid #999; background: linear-gradient(#666, #666) center / 4px 1px no-repeat, #fff; }
.tg.plus { background: linear-gradient(#666, #666) center / 4px 1px no-repeat, linear-gradient(#666, #666) center / 1px 4px no-repeat, #fff; }
.tree input { appearance: none; position: relative; width: 9px; height: 9px; margin-bottom: 4px; border: 1px solid #a9c4da; background: #eaf3fa; }
.tree input:checked::after { content: ""; position: absolute; inset: -2px -2px 0 0; background: #3c7cb0; clip-path: polygon(0 50%, 22% 40%, 40% 62%, 80% 0, 100% 14%, 44% 100%); }

.vscroll { flex: none; width: 10px; display: flex; flex-direction: column; align-items: center; justify-content: space-between; padding: 5px 0 3px; background: #f1f1f1; }
.vscroll .thumb { width: 9px; height: 10px; background: #c9c9c9; }
.vscroll .low { margin: 25px 0 auto; }
.hscroll { height: 10px; display: flex; align-items: center; justify-content: space-between; padding: 0 12px 0 4px; background: #f1f1f1; }
.hscroll .thumb { flex: 1; height: 9px; background: #cdcdcd; margin: 0 18px 0 3px; }
.hscroll.off { height: 11px; opacity: .4; }
.chev { width: 4px; height: 4px; border: solid #555; border-width: 1px 0 0 1px; transform: rotate(45deg); }
.chev.down { transform: rotate(225deg); }
.chev.left { transform: rotate(-45deg); }
.chev.right { transform: rotate(135deg); }
.splitter { flex: none; height: 3px; border-top: 1px solid #aaa; background: linear-gradient(#888, #888) center / 9px 2px no-repeat, #eee; }
.view-tools { flex: none; display: flex; align-items: center; height: 22px; gap: 9px; padding: 0 4px; }
.view-tools svg { width: 16px; height: 16px; }
.options { margin-left: auto; gap: 4px; }
.views-box { border: 0; }
.views { flex: 1; height: 36px; display: grid; grid-auto-rows: 1fr; }
.views li { display: flex; align-items: center; gap: 4px; padding-left: 18px; }
.views svg { width: 14px; height: 14px; margin-bottom: 3px; }
.props-box { flex: 1; min-height: 0; padding-top: 1px; background: #fff; overflow: hidden; border: 1px solid #bbb; border-width: 1px 0 0; }
.props { width: 100%; height: 219px; table-layout: fixed; border-collapse: collapse; }
.props th, .props td { padding: 0; text-align: left; font-weight: 400; line-height: 15px; white-space: nowrap; }
.props th:first-child, .props td:first-child { padding-left: 2px; }
.props th:first-child { width: 95px; }

/* document area */
.viewer { flex: 1; min-width: 0; position: relative; padding: 41px 0 28px 3px; background: #555; overflow: hidden; }
.sheet { background: #fff; }
.model { width: 100%; height: auto; }
.credit { height: 26px; display: flex; align-items: baseline; justify-content: flex-end; gap: 3px; padding-top: 7px; white-space: nowrap; color: #111; font-family: "Liberation Sans Narrow", "Liberation Sans", sans-serif; font-style: italic; line-height: 14px; }
.name { font-size: 12px; }
.role { font-size: 9px; }
.quals { font-size: 6px; }
.model-tools { position: absolute; top: 26px; left: 10px; display: flex; align-items: center; height: 22px; padding-right: 3px; background: #e6e6e6; }
.model-tools svg { width: 16px; height: 16px; }
.model-tools button { width: 24px; height: 22px; }
.model-tools .drop { width: 9px; }
.model-tools .on { background: #d6d9db; margin-left: 3px; }
.model-tools .drop.faded { opacity: .4; }
.model-tools .first { margin-right: 3px; }
.model-tools .play { margin-left: 7px; }
.model-tools .section { margin-left: 3px; }
.model-tools select { width: 94px; height: 19px; margin-left: 1px; padding-left: 2px; appearance: none; border: 1px solid #ccc;
  background: linear-gradient(45deg, transparent 50%, #888 50%, #888 65%, transparent 65%) right 5px center / 3px 3px no-repeat, linear-gradient(-45deg, transparent 50%, #888 50%, #888 65%, transparent 65%) right 2px center / 3px 3px no-repeat, #fff; }
```
